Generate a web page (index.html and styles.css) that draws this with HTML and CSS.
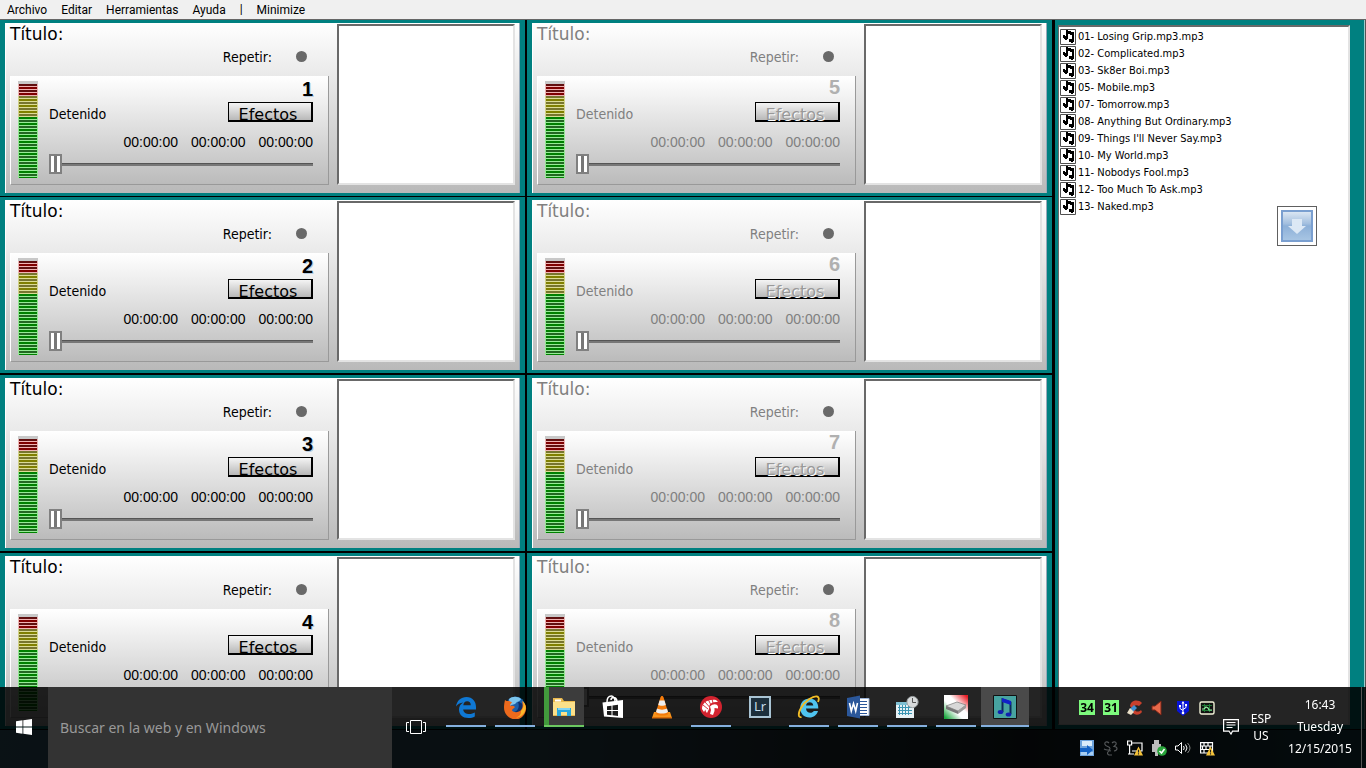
FILE: index.html
```html
<!DOCTYPE html>
<html lang="es">
<head>
<meta charset="utf-8">
<title>Reproductor</title>
<link rel="stylesheet" href="styles.css">
</head>
<body>
<svg class="sprites" aria-hidden="true">
  <symbol id="note" viewBox="0 0 16 16">
    <path fill="#fff" stroke="#505050" d="M.5.5h15v15H.5z"/>
    <path d="M6 1h2v1h3v1h3v10h-1v1h-2v-1H9v-3h3V6h-2V5H8v5H7v1H5v-1H4V9H3V6h2v1h1z"/>
  </symbol>
  <symbol id="warn" viewBox="0 0 10 10"><path fill="#f5c33b" d="M5 0l5 10H0z"/><path stroke="#222" stroke-width="1.2" d="M5 3.5v3.2M5 7.6v1.2"/></symbol>
</svg>
<div class="window">
  <nav class="menubar">
    <button>Archivo</button><button>Editar</button><button>Herramientas</button><button>Ayuda</button><span>|</span><button>Minimize</button>
  </nav>
  <main class="workspace">
    <section class="decks">
      <div class="cell"><article class="deck">
        <div class="controls">
          <h2 class="title">Título:</h2>
          <label class="repeat">Repetir:<input type="checkbox"></label>
          <div class="player">
            <div class="meter"><i class="high"></i><i class="mid"></i><i class="low"></i></div>
            <div class="body">
              <div class="number">1</div>
              <div class="status"><span>Detenido</span><button class="fx">Efectos</button></div>
              <div class="times"><span>00:00:00</span><span>00:00:00</span><span>00:00:00</span></div>
              <input class="seek" type="range" value="0" aria-label="Posición 1">
            </div>
          </div>
        </div>
        <div class="queue"></div>
      </article></div>
      <div class="cell"><article class="deck off">
        <div class="controls">
          <h2 class="title">Título:</h2>
          <label class="repeat">Repetir:<input type="checkbox" disabled></label>
          <div class="player">
            <div class="meter"><i class="high"></i><i class="mid"></i><i class="low"></i></div>
            <div class="body">
              <div class="number">5</div>
              <div class="status"><span>Detenido</span><button class="fx" disabled>Efectos</button></div>
              <div class="times"><span>00:00:00</span><span>00:00:00</span><span>00:00:00</span></div>
              <input class="seek" type="range" value="0" aria-label="Posición 5" disabled>
            </div>
          </div>
        </div>
        <div class="queue"></div>
      </article></div>
      <div class="cell"><article class="deck">
        <div class="controls">
          <h2 class="title">Título:</h2>
          <label class="repeat">Repetir:<input type="checkbox"></label>
          <div class="player">
            <div class="meter"><i class="high"></i><i class="mid"></i><i class="low"></i></div>
            <div class="body">
              <div class="number">2</div>
              <div class="status"><span>Detenido</span><button class="fx">Efectos</button></div>
              <div class="times"><span>00:00:00</span><span>00:00:00</span><span>00:00:00</span></div>
              <input class="seek" type="range" value="0" aria-label="Posición 2">
            </div>
          </div>
        </div>
        <div class="queue"></div>
      </article></div>
      <div class="cell"><article class="deck off">
        <div class="controls">
          <h2 class="title">Título:</h2>
          <label class="repeat">Repetir:<input type="checkbox" disabled></label>
          <div class="player">
            <div class="meter"><i class="high"></i><i class="mid"></i><i class="low"></i></div>
            <div class="body">
              <div class="number">6</div>
              <div class="status"><span>Detenido</span><button class="fx" disabled>Efectos</button></div>
              <div class="times"><span>00:00:00</span><span>00:00:00</span><span>00:00:00</span></div>
              <input class="seek" type="range" value="0" aria-label="Posición 6" disabled>
            </div>
          </div>
        </div>
        <div class="queue"></div>
      </article></div>
      <div class="cell"><article class="deck">
        <div class="controls">
          <h2 class="title">Título:</h2>
          <label class="repeat">Repetir:<input type="checkbox"></label>
          <div class="player">
            <div class="meter"><i class="high"></i><i class="mid"></i><i class="low"></i></div>
            <div class="body">
              <div class="number">3</div>
              <div class="status"><span>Detenido</span><button class="fx">Efectos</button></div>
              <div class="times"><span>00:00:00</span><span>00:00:00</span><span>00:00:00</span></div>
              <input class="seek" type="range" value="0" aria-label="Posición 3">
            </div>
          </div>
        </div>
        <div class="queue"></div>
      </article></div>
      <div class="cell"><article class="deck off">
        <div class="controls">
          <h2 class="title">Título:</h2>
          <label class="repeat">Repetir:<input type="checkbox" disabled></label>
          <div class="player">
            <div class="meter"><i class="high"></i><i class="mid"></i><i class="low"></i></div>
            <div class="body">
              <div class="number">7</div>
              <div class="status"><span>Detenido</span><button class="fx" disabled>Efectos</button></div>
              <div class="times"><span>00:00:00</span><span>00:00:00</span><span>00:00:00</span></div>
              <input class="seek" type="range" value="0" aria-label="Posición 7" disabled>
            </div>
          </div>
        </div>
        <div class="queue"></div>
      </article></div>
      <div class="cell"><article class="deck">
        <div class="controls">
          <h2 class="title">Título:</h2>
          <label class="repeat">Repetir:<input type="checkbox"></label>
          <div class="player">
            <div class="meter"><i class="high"></i><i class="mid"></i><i class="low"></i></div>
            <div class="body">
              <div class="number">4</div>
              <div class="status"><span>Detenido</span><button class="fx">Efectos</button></div>
              <div class="times"><span>00:00:00</span><span>00:00:00</span><span>00:00:00</span></div>
              <input class="seek" type="range" value="0" aria-label="Posición 4">
            </div>
          </div>
        </div>
        <div class="queue"></div>
      </article></div>
      <div class="cell"><article class="deck off">
        <div class="controls">
          <h2 class="title">Título:</h2>
          <label class="repeat">Repetir:<input type="checkbox" disabled></label>
          <div class="player">
            <div class="meter"><i class="high"></i><i class="mid"></i><i class="low"></i></div>
            <div class="body">
              <div class="number">8</div>
              <div class="status"><span>Detenido</span><button class="fx" disabled>Efectos</button></div>
              <div class="times"><span>00:00:00</span><span>00:00:00</span><span>00:00:00</span></div>
              <input class="seek" type="range" value="0" aria-label="Posición 8" disabled>
            </div>
          </div>
        </div>
        <div class="queue"></div>
      </article></div>
    </section>
    <aside class="library">
      <ul class="tracks">
        <li><svg><use href="#note"/></svg>01- Losing Grip.mp3.mp3</li>
        <li><svg><use href="#note"/></svg>02- Complicated.mp3</li>
        <li><svg><use href="#note"/></svg>03- Sk8er Boi.mp3</li>
        <li><svg><use href="#note"/></svg>05- Mobile.mp3</li>
        <li><svg><use href="#note"/></svg>07- Tomorrow.mp3</li>
        <li><svg><use href="#note"/></svg>08- Anything But Ordinary.mp3</li>
        <li><svg><use href="#note"/></svg>09- Things I'll Never Say.mp3</li>
        <li><svg><use href="#note"/></svg>10- My World.mp3</li>
        <li><svg><use href="#note"/></svg>11- Nobodys Fool.mp3</li>
        <li><svg><use href="#note"/></svg>12- Too Much To Ask.mp3</li>
        <li><svg><use href="#note"/></svg>13- Naked.mp3</li>
      </ul>
      <button class="drop" aria-label="Descargar">
        <svg viewBox="0 0 32 32" width="32" height="32">
          <defs><linearGradient id="dg" x2="0" y2="1"><stop offset="0" stop-color="#dfe9f4"/><stop offset=".42" stop-color="#a3bfdf"/><stop offset=".5" stop-color="#8db0d8"/><stop offset="1" stop-color="#a9c6e4"/></linearGradient></defs>
          <path fill="url(#dg)" stroke="#7a9fd0" stroke-width="2" d="M1 1h30v30H1z"/>
          <path fill="#dce8f5" d="M11 9h10v7h4l-9 8-9-8h4z"/>
        </svg>
      </button>
    </aside>
  </main>
</div>

<footer class="taskbar">
  <button class="start" aria-label="Inicio"><svg viewBox="0 0 16 16" width="16" height="16"><path fill="#fff" d="M0 2.2L6.5 1.3v6.3H0zM7.3 1.2L16 0v7.6H7.3zM0 8.4h6.5v6.3L0 13.8zM7.3 8.4H16V16l-8.7-1.2z"/></svg></button>
  <input class="search" type="text" placeholder="Buscar en la web y en Windows" aria-label="Buscar">
  <button class="taskview" aria-label="Vista de tareas"><svg viewBox="0 0 20 14" width="20" height="14"><path fill="none" stroke="#fff" d="M4.5.5h11v13h-11zM3 2.500H.5v9H3M17 2.500h2.500v9H17"/></svg></button>
  <div class="apps">
    <button class="app open" aria-label="Edge"><svg viewBox="0 0 24 24"><path fill="#0f78d4" d="M2 11.500C3 5.500 7 2 12.500 2 18.500 2 22 6.500 22 12v2.500H9.200c.2 3.200 3 4.500 6 4.500 2.200 0 4.200-.6 5.600-1.500v4C19 22.600 16.700 23 14.500 23 8.700 23 5 19.500 5 14.500c0-3.200 1.700-5.700 4.300-7C6 7.800 3.500 9.500 2 11.500zm7.300-1.300h7.500c0-2.500-1.400-4-3.700-4-2.100 0-3.500 1.600-3.800 4z"/></svg></button>
    <button class="app open" aria-label="Firefox"><svg viewBox="0 0 24 24"><circle cx="12.500" cy="11" r="9.500" fill="#1b5fa8"/><path fill="#7cc4ec" d="M6 4c3-3 9-3 12 0-1 3-4 2-5 4s-4 1-6 3z"/><path fill="#0c2f6b" d="M15 7c3 0 6 2 5 7-2 4-6 5-9 3 4-1 6-5 4-10z"/><path fill="#ed6a1d" d="M2 5c1 1 2 1 3 1 1.500 0 3 .5 4 1.500-1 1-2 2-2 3.500 2-.5 4 0 5 1-1 1.500-3 2-3 3.500 2 2.500 7 2 9-.5 2-2.500 2-6 1-9 3 2 4.500 5 4 8.500-.8 6-5.500 10-11 10C5 23.500 1 18.500 1 12.500 1 9.500 1.500 7.500 2 5z"/><path fill="#fbb829" d="M18 16c3-3 3-7 1.500-10 3.500 3 4 7 2.500 10-1.500 4-5 6.500-9 6.500 4-1 5-3.500 5-6.500z"/></svg></button>
    <button class="app open files" aria-label="Explorador"><svg viewBox="0 0 24 24"><path fill="#e9b84c" d="M1 3h9l2 3h11v15H1z"/><path fill="#fff" d="M3 4.500h6v2H3z"/><path fill="#fbe08a" d="M1 7h22v13H1z"/><path fill="#28a7dd" d="M5 13h14v8h-4v-4H9v4H5z"/><path fill="#82d4f3" d="M6 13h12v2H6z"/></svg></button>
    <button class="app" aria-label="Tienda"><svg viewBox="0 0 24 24"><path fill="none" stroke="#fff" stroke-width="1.500" d="M6 7C6 1.500 9 1 10.500 1S14 3 14 6M10 5c0-3 5-4 6 1"/><path fill="#fff" fill-rule="evenodd" d="M1.500 7.500L22 5v18L3 21.500zM6 11.300v3.700h4.500v-4.300zM11.500 10.500V15H17V9.800zM6 16v3.700l4.500.5V16zM11.500 16v4.300l5.500.6V16z"/></svg></button>
    <button class="app" aria-label="VLC"><svg viewBox="0 0 24 24"><path fill="#f7941d" d="M4 17h16l2 6H2z"/><path fill="#d86b08" d="M2 22h20v1.500H2z"/><path fill="#f47b0b" d="M12 1c1 0 1.300.6 1.600 1.500L18.500 19c-2 2-11 2-13 0l4.900-16.500C10.700 1.600 11 1 12 1z"/><path fill="#eee" d="M9.500 5.500h5l1.300 4.500c-1.800 1-5.800 1-7.600 0zM7 13.500c2.500 1.500 7.500 1.500 10 0l1 3.500c-3 2-9 2-12 0z"/></svg></button>
    <button class="app open" aria-label="Casco"><svg viewBox="0 0 24 24"><circle cx="12" cy="12" r="11" fill="#d2232f"/><path fill="#fff" d="M3 14C3 8 8 4 17 5l2 2c-4-.5-7 .5-8.500 3L10 14l-2 4c-1-1-1.500-2-1.500-3.500L5 17z"/><path stroke="#d2232f" stroke-width=".9" d="M4 10l5 4M6 7l4.500 5M9.500 5l2.500 5M13 4l1 4"/><path fill="#fff" d="M11 11.500c3-3 7-3 8 0v2l-3.500-.5v3L14 20l-3-1 1-4z"/></svg></button>
    <button class="app" aria-label="Lightroom"><span class="lr">Lr</span></button>
    <button class="app open" aria-label="Internet Explorer"><svg viewBox="0 0 24 24"><path fill="#4fc3ee" d="M12.500 3.500c5.500 0 9 4 8.800 10H9c.3 3 2 4.300 4.300 4.300 1.700 0 2.700-.6 3.500-1.800H21c-1.200 4-4.200 6.500-8.500 6.500-5.500 0-9.200-3.800-9.200-9.500s3.900-9.500 9.200-9.500zM9 10.500h7.300c-.3-2.200-1.700-3.300-3.600-3.300S9.400 8.300 9 10.500z"/><path fill="none" stroke="#f2bd26" stroke-width="1.800" d="M4.500 22C1.500 23 .5 19 4 13 8 6 16 .8 20 1.500c2.500.5 2 3 1 5.500"/></svg></button>
    <button class="app open" aria-label="Word"><svg viewBox="0 0 24 24"><path fill="#fff" stroke="#9db4d8" d="M12 3.500h11v17H12z"/><path stroke="#2b579a" d="M14 6.500h7M14 9.500h7M14 12.500h7M14 15.500h7M14 18.500h7"/><path fill="#2b579a" d="M1 3l13-2.500v23L1 21z"/><path fill="none" stroke="#fff" stroke-width="1.600" d="M3.500 8l1.800 8L7.500 8.500 9.700 16l1.800-8"/></svg></button>
    <button class="app open" aria-label="Planificador"><svg viewBox="0 0 24 24"><path fill="#e6f1f5" d="M1 9h18v14H1z"/><path fill="#7ebfd2" d="M1 7h18v3H1z"/><path fill="none" stroke="#3b95b3" d="M4.500 10v10M7.500 10v10M10.500 10v10M13.500 10v10M3 12.500h14M3 15.500h14M3 18.500h14"/><circle cx="17.500" cy="7" r="5.600" fill="#d7dadb" stroke="#9a9fa1"/><path fill="none" stroke="#555" d="M17.500 3v4.500H21"/></svg></button>
    <button class="app open" aria-label="Disco"><svg viewBox="0 0 24 24"><defs><linearGradient id="flag" x1="0" y1="1" x2="1" y2="0"><stop offset=".05" stop-color="#19a83d"/><stop offset=".4" stop-color="#fff"/><stop offset=".6" stop-color="#fff"/><stop offset=".95" stop-color="#e81c24"/></linearGradient></defs><path fill="url(#flag)" d="M0 0h24v24H0z"/><path fill="#d8d8d8" stroke="#777" stroke-width=".7" d="M2 11l11-4 9 3-8 6z"/><path fill="#777" d="M2 11l12 5v3L2 14z"/><path fill="#9a9a9a" d="M14 16l8-6v3l-8 6z"/></svg></button>
    <button class="app open active" aria-label="Reproductor"><svg viewBox="0 0 24 24"><path fill="#47a3a0" stroke="#111" d="M.5.5h23v23H.5z"/><path fill="none" stroke="#0a2a58" stroke-width="2" d="M9.500 17V4.500l8 3V19"/><path fill="#1020c8" d="M9 3l9 3v4L9 7z"/><ellipse cx="7.500" cy="17" rx="2.800" ry="2" fill="#1020b0"/><ellipse cx="15.500" cy="19.500" rx="2.800" ry="2" fill="#1020b0"/></svg></button>
  </div>
  <div class="tray">
    <span class="temp">34</span><span class="temp">31</span>
    <svg viewBox="0 0 16 16"><path fill="#c8402c" d="M15 3C11-1 4 0 3 6l3 4c0-4 3-6 6-4zM14 10c-2 2-5 2-6 0l-3 2c3 4 8 3 10 0z"/><path fill="#3f8fd0" d="M7 5l3 3-4 4-3-3z"/><path fill="#e9e0c8" d="M3 8l4 4-3 3-4-2z"/></svg>
    <svg viewBox="0 0 16 16"><path fill="#e8694a" stroke="#7a2417" d="M1 6h3l6-5v14l-6-5H1z"/></svg>
    <svg viewBox="0 0 16 16"><path fill="#0713d8" d="M2 1h12v10l-6 5-6-5z"/><path fill="none" stroke="#fff" d="M8 2.500V13M5 6v2.500l3 2M11 5v2.500l-3 2"/><path fill="#fff" d="M8 1l1.500 2.500h-3zM4 5h2v2H4zM10 4h2v2h-2z"/><circle cx="8" cy="13" r="1.300" fill="#fff"/></svg>
    <svg viewBox="0 0 16 16"><rect x="1" y="2" width="14" height="12" rx="1.500" fill="#111" stroke="#f2f2d8" stroke-width="1.400"/><path stroke="#1f7a35" d="M3 5.500h10M3 10.500h10M5.500 4v8M10.500 4v8"/><path fill="none" stroke="#8ff0a0" stroke-width="1.200" d="M3 9h2l2-2 2 1 1 2h3"/></svg>
    <svg viewBox="0 0 16 16"><path fill="#6da3dc" d="M1 0h14v16H1z"/><path fill="#d9ecfb" d="M3 1h10v5H3z"/><path fill="#a8cdf0" d="M2 12h12v3H2z"/><path fill="#1261c4" d="M1 8h7V5l6 5-6 5v-3H1z"/></svg>
    <svg viewBox="0 0 16 16"><path fill="none" stroke="#55585a" stroke-width="1.100" d="M6 3C4 1 1 2 2 4.500S7 6 7 8.500 3 10 1 9M9 3c2-2 5-1 4 1.500L11 6.500c4 0 4 4 0 4.500M8 11c-3-1-5 3-2 4h3"/></svg>
    <svg viewBox="0 0 16 16"><path fill="none" stroke="#fff" stroke-width="1.200" d="M5 3h10v8H5M0.600 1h4v4h-4zM2.600 5v9M1 14h6"/><use href="#warn" x="7" y="6" width="9" height="10"/></svg>
    <svg viewBox="0 0 16 16"><path fill="#bbb" d="M3 0h5v4H3zM1 4h9v8H7v4H4v-4H1z"/><circle cx="11" cy="11" r="4.800" fill="#28a53a"/><path fill="none" stroke="#fff" stroke-width="1.600" d="M8.500 11l2 2 3-4"/></svg>
    <svg viewBox="0 0 16 16"><path fill="none" stroke="#fff" d="M.5 6h2.500l3.500-3.500v11L3 10H.5zM8.500 6q1.500 2 0 4M10.500 4.500q3 3.500 0 7"/><path fill="none" stroke="#888" d="M12.500 3q5 5 0 10"/></svg>
    <svg viewBox="0 0 16 16"><path fill="none" stroke="#fff" stroke-width="1.200" d="M1 2.600h13M1 6h13M1 9.500h13M1 13h13M1.600 2v11M5 2.500V6M9 2.500V6M13.500 2v10M7 6v3.500M11 6v3.500M5 9.500V13M3.500 6v3.500"/><use href="#warn" x="7" y="6" width="9" height="10"/></svg>
  </div>
  <button class="notify" aria-label="Notificaciones"><svg viewBox="0 0 16 16" width="16" height="16"><path fill="none" stroke="#fff" stroke-width="1.200" d="M.6.6h14.800v11.500H9.500L8 15l-2-2.900H.6z"/><path stroke="#fff" d="M3.500 3.500h9M3.500 6h9M3.500 8.500h6"/></svg></button>
  <div class="lang"><span>ESP</span><span>US</span></div>
  <div class="clock"><span>16:43</span><span>Tuesday</span><span>12/15/2015</span></div>
  <button class="peek" aria-label="Mostrar escritorio"></button>
</footer>
</body>
</html>
```

FILE: styles.css
```css
* { box-sizing: border-box; }
body {
  margin: 0;
  height: 100vh;
  overflow: hidden;
  background: linear-gradient(90deg, #4a7d96, #406878 40%, #20282c 75%, #205060);
  font-family: "DejaVu Sans Condensed", "Noto Sans", sans-serif;
  font-size: 14px;
  color: #000;
}
button { border: 0; padding: 0; margin: 0; background: none; font: inherit; color: inherit; }
.sprites { display: none; }

.window { border-bottom: 1px solid #000; }
.menubar {
  display: flex;
  gap: 14px;
  height: 20px;
  padding: 0 7px;
  background: #f0f0f0;
  border-bottom: 1px solid #666;
  font: 12px/18px Roboto, "Noto Sans", sans-serif;
}
.workspace {
  display: grid;
  grid-template-columns: 1055fr 310fr;
  background: #008080;
  border-right: 1px solid #555;
}
.decks { display: grid; grid-template-columns: 527fr 528fr; }
.cell {
  padding: 3px 5px;
  border-right: 2px solid #000;
  border-bottom: 2px solid #000;
}
.cell:nth-child(2n) { border-right-width: 3px; }
.cell:nth-child(-n+2) { border-bottom-width: 1px; }
.cell:nth-last-child(-n+2) { border-bottom: 0; }

.deck {
  display: flex;
  gap: 8px;
  height: 170px;
  padding: 1px 4px 8px 4px;
  background: linear-gradient(#fff, #b9b9b9);
  border-left: 1px solid #fff;
  border-right: 1px solid #9ab;
}
.controls { flex: 1; display: flex; flex-direction: column; }
.title { margin: 0; font: 17px/20px "DejaVu Sans", sans-serif; height: 22px; }
.repeat {
  display: flex;
  align-items: center;
  justify-content: flex-end;
  gap: 24px;
  height: 22px;
  margin: 0 22px 8px 0;
}
.repeat input {
  appearance: none;
  width: 11px;
  height: 11px;
  margin: 0 0 2px;
  border-radius: 50%;
  background: #696969;
}
.player {
  flex: 1;
  display: flex;
  gap: 11px;
  padding: 5px 15px 6px 7px;
  background: linear-gradient(#fff, #bbb);
  border: solid #999;
  border-width: 0 1px 1px 0;
  border-left: 1px solid #fff;
}
.meter { width: 20px; padding: 3px 1px 0 1px; background: linear-gradient(#c8c8c8 3px, #ebb4b4 3px 15px, #d2d28c 15px 36px, #96e696 36px); }
.meter i { display: block; }
.high { height: 12px; background: repeating-linear-gradient(#600f0f 0 2px, #f0b4b4 2px 3px, #800000 3px 5px, #f0b4b4 5px 6px); }
.mid { height: 21px; background: repeating-linear-gradient(#77752f 0 2px, #dcdc96 2px 3px, #808000 3px 5px, #dcdc96 5px 6px); }
.low { height: 61px; background: repeating-linear-gradient(#008000 0 2px, #96eb96 2px 3px, #226622 3px 5px, #96eb96 5px 6px); }
.body { flex: 1; display: flex; flex-direction: column; }
.number {
  height: 21px;
  font: bold 20px/16px "Liberation Sans", sans-serif;
  text-align: right;
  text-shadow: 1px 1px #b8cce0;
}
.status { display: flex; justify-content: space-between; align-items: flex-start; height: 29px; line-height: 24px; }
.fx {
  width: 85px;
  height: 20px;
  padding: 2px 4px 0 0;
  border: solid #000;
  border-width: 1px 2px 2px 1px;
  background: linear-gradient(#f4f4f4, #b8b8b8);
  font: 16px/20px "DejaVu Sans", sans-serif;
}
.times { display: flex; justify-content: flex-end; gap: 13px; font: 14px/22px "Liberation Sans", sans-serif; height: 23px; }
.seek { appearance: none; display: block; width: 100%; height: 20px; margin: 0; background: linear-gradient(transparent 9px, #555 9px 10px, #777 10px 12px, transparent 12px); }
.seek::-webkit-slider-thumb {
  appearance: none;
  width: 13px;
  height: 20px;
  border: 2px solid #808080;
  background: linear-gradient(90deg, #fff 3px, #777 3px 6px, #fff 6px);
}
.queue {
  width: 178px;
  background: #fff;
  border: 2px solid;
  border-color: #696969 #e3e3e3 #e3e3e3 #696969;
}
.off, .off .fx { color: #808080; }
.off .number { color: #b0b0b0; text-shadow: none; line-height: 12px; }
.off .fx { color: #999; text-shadow: 1px 1px #fff; }

.library { position: relative; padding: 5px 14px 4px 3px; border-right: 1px solid #9cc; }
.tracks {
  height: 100%;
  margin: 0;
  padding: 1px 0 0;
  list-style: none;
  background: #fff;
  border: solid;
  border-width: 2px 2px 1px 1px;
  border-color: #696969 #e3e3e3 #e3e3e3 #696969;
  font-size: 11px;
}
.tracks li { display: flex; align-items: center; gap: 2px; height: 17px; padding-left: 1px; }
.tracks svg { width: 16px; height: 16px; }
.drop {
  position: absolute;
  top: 186px;
  right: 47px;
  display: grid;
  place-items: center;
  width: 40px;
  height: 40px;
  background: #fff;
  border: 1px solid #606060;
}

.taskbar {
  position: fixed;
  inset: auto 0 0 0;
  display: flex;
  align-items: center;
  height: 81px;
  background: rgba(0, 0, 0, .86);
  color: #fff;
  font: 12px/22px "Noto Sans", sans-serif;
}
.start, .taskview, .notify, .lang, .clock { margin-bottom: 2px; }
.start { width: 48px; display: grid; place-items: center; }
.search {
  width: 344px;
  height: 81px;
  padding: 0 12px;
  border: 0;
  background: #333;
  font: 14px "Noto Sans", sans-serif;
}
.search::placeholder { color: #999; opacity: 1; }
.taskview { width: 48px; display: grid; place-items: center; }
.apps { display: flex; gap: 1px; align-self: flex-start; padding-left: 2px; }
.app { position: relative; width: 48px; height: 40px; display: grid; place-items: center; }
.app svg { width: 24px; height: 24px; }
.open::after { content: ""; position: absolute; inset: auto 4px 0 4px; height: 2px; background: #85b0df; }
.files { width: 40px; margin: 0 4px; background: linear-gradient(90deg, #429a3c 5px, #3c3c3c 5px); }
.files::after { left: 0; right: 0; background: #6cc860; }
.active { background: #4a4a4a; }
.active::after { left: 0; right: 0; }
.lr {
  width: 22px;
  height: 22px;
  border: 2px solid #a9c4d4;
  background: #1c2f3c;
  color: #c5dcea;
  font: 13px/17px "Noto Sans", sans-serif;
}
.tray {
  display: grid;
  grid-template-columns: repeat(6, 24px);
  grid-template-rows: 40px 40px;
  place-items: center;
  margin-left: auto;
}
.tray svg { width: 16px; height: 16px; }
.temp { width: 16px; height: 15px; background: #7dfa7d; color: #000; font: bold 12px/15px "Noto Sans", sans-serif; text-align: center; }
.notify { width: 24px; display: grid; place-items: center; }
.lang { display: flex; flex-direction: column; width: 36px; text-align: center; line-height: 17px; }
.clock { display: flex; flex-direction: column; width: 82px; text-align: center; }
.peek { width: 5px; height: 81px; border-left: 1px solid #555; }
```
